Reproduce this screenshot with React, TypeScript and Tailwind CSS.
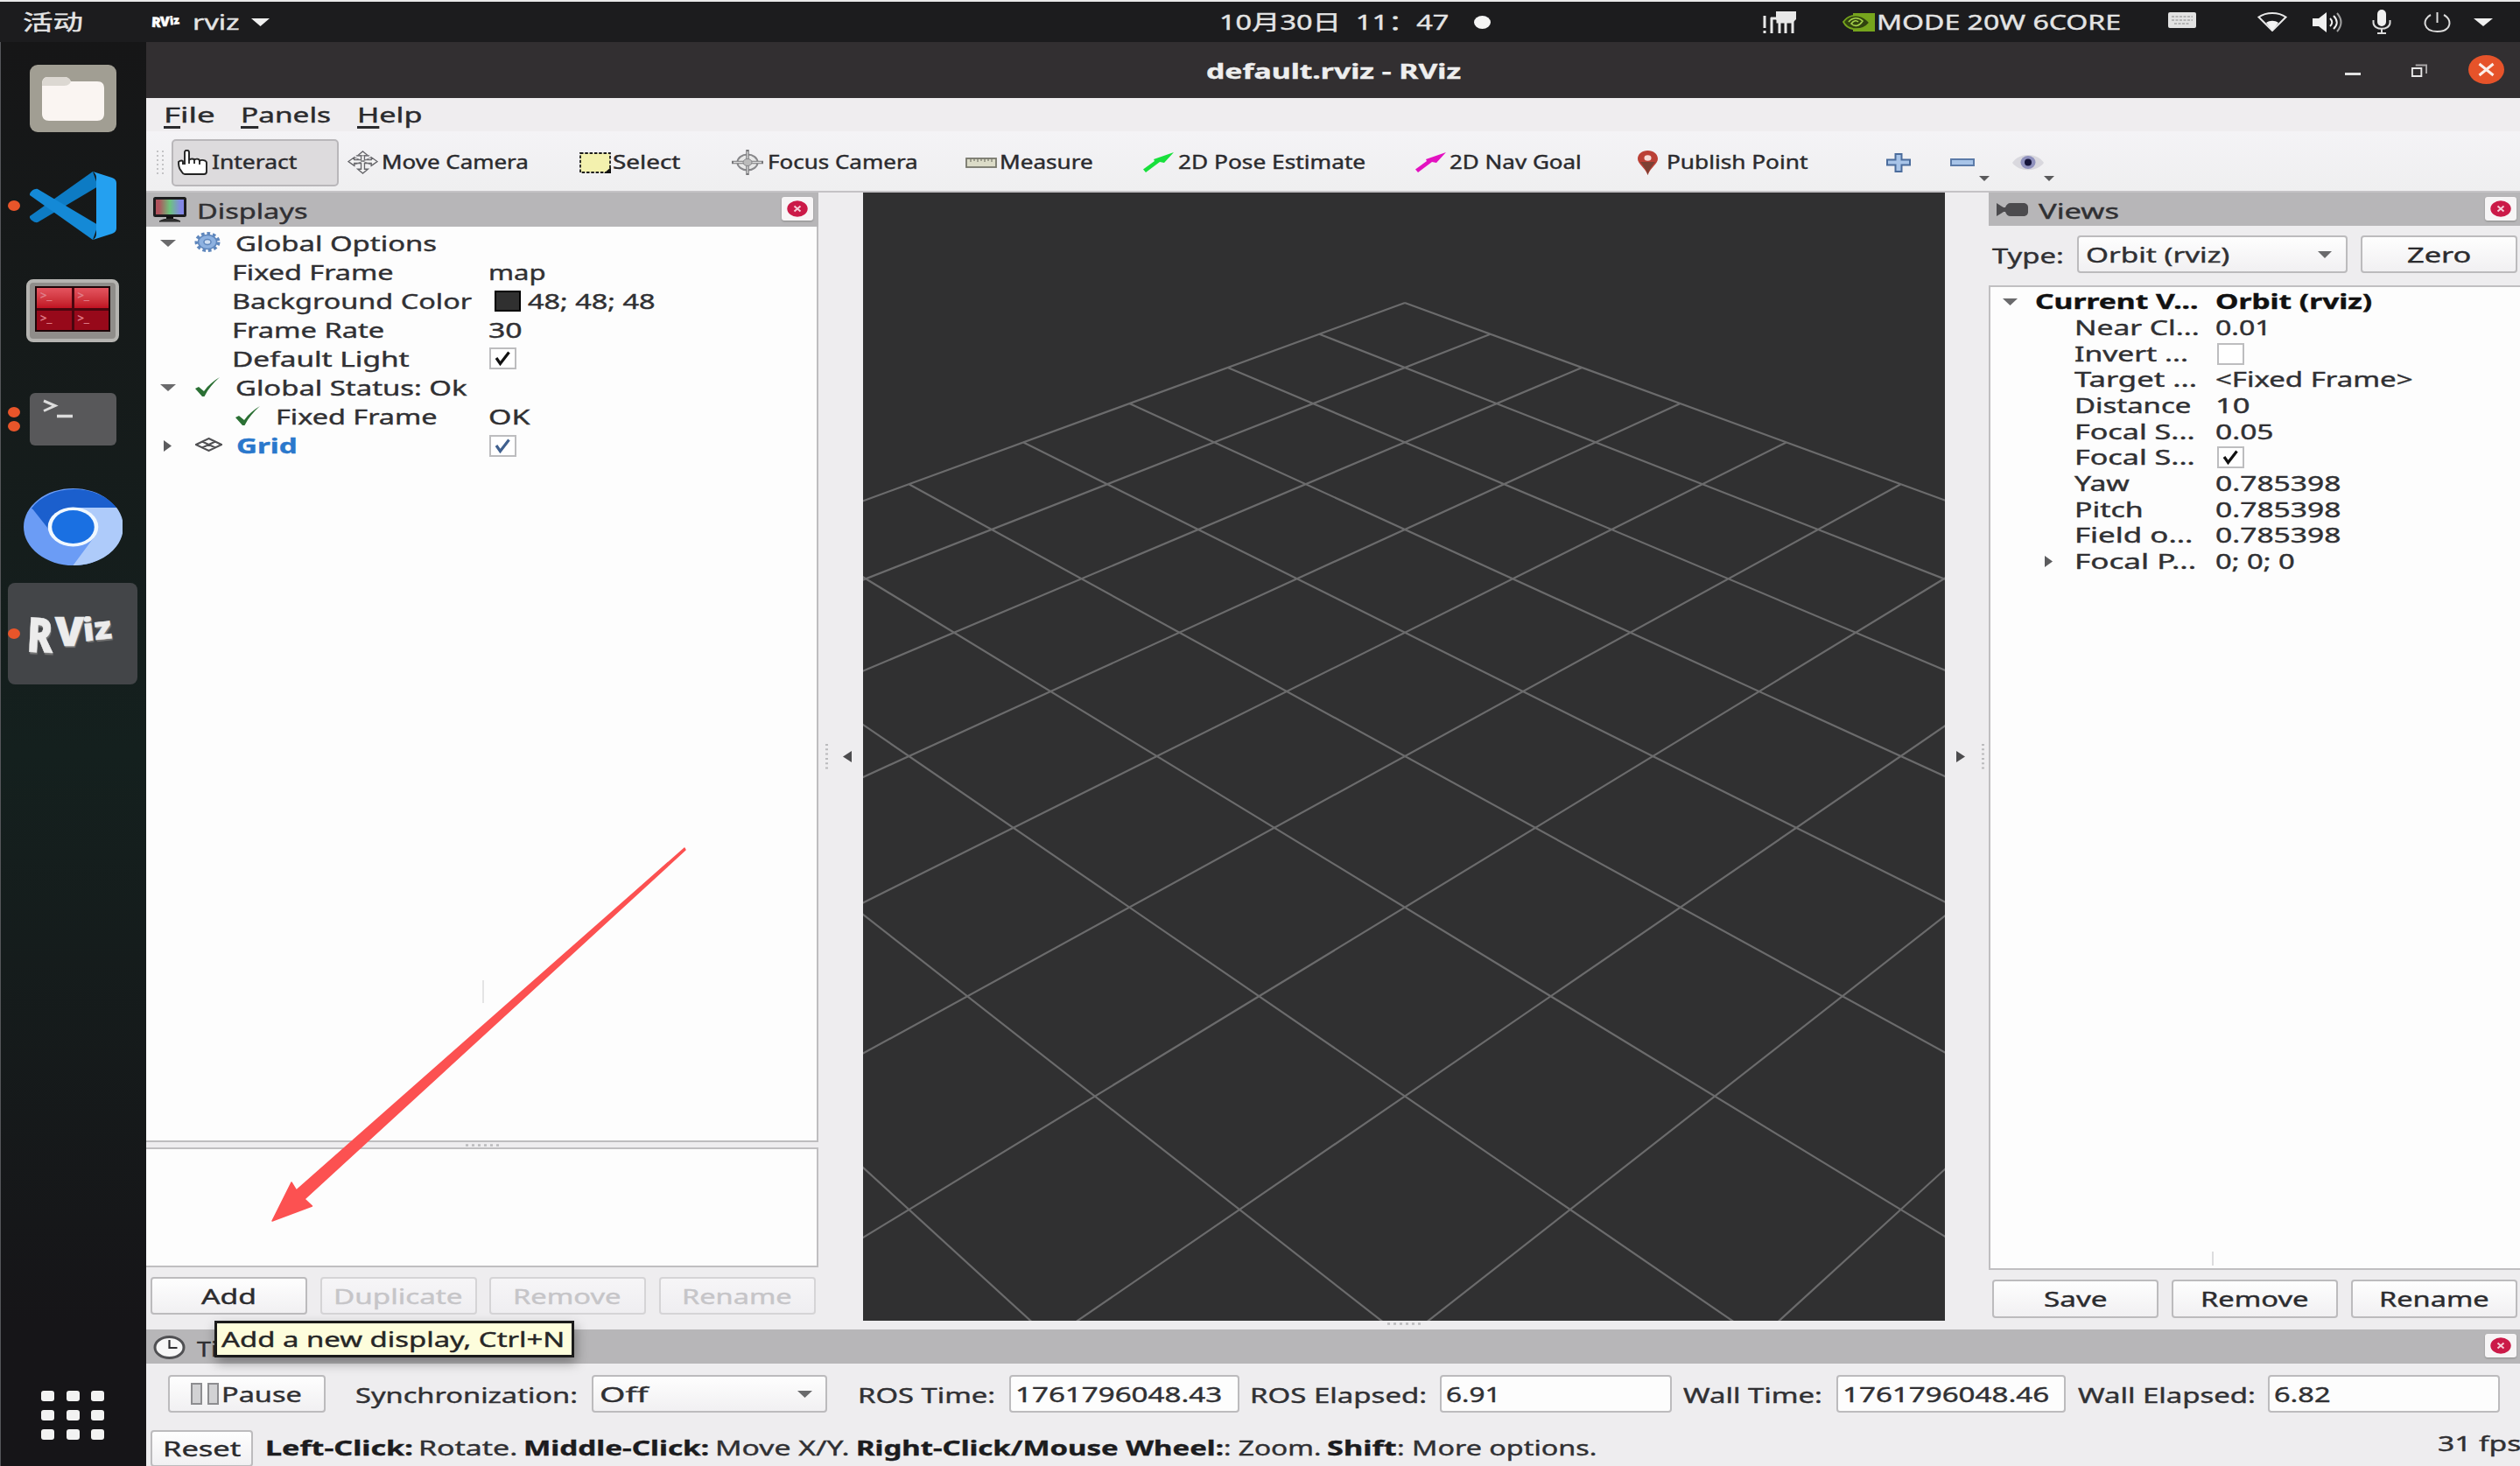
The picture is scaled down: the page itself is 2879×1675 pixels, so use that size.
import React, { useLayoutEffect, useRef, useState } from "react";

/** Single line of text stretched horizontally so that its ink fills a given width. */
function T({ w, c = "", children }: { w: number; c?: string; children: React.ReactNode }) {
  const ref = useRef<HTMLSpanElement>(null);
  const [k, setK] = useState(1);
  useLayoutEffect(() => {
    const el = ref.current;
    if (el && el.offsetWidth > 0) setK((w + 3) / el.offsetWidth);
  }, [w]);
  return (
    <span className={`block shrink-0 whitespace-pre leading-none ${c}`} style={{ width: w }}>
      <span ref={ref} className="inline-block origin-left" style={{ transform: `translateX(-2px) scaleX(${k})` }}>
        {children}
      </span>
    </span>
  );
}

function Svg({ c, box, children }: { c: string; box: string; children: React.ReactNode }) {
  return (
    <svg className={`block shrink-0 ${c}`} viewBox={box} preserveAspectRatio="none" fill="none">
      {children}
    </svg>
  );
}

const Down = ({ c }: { c: string }) => (
  <Svg c={c} box="0 0 10 6">
    <path d="M0 0h10L5 6z" fill="currentColor" />
  </Svg>
);
const Right = ({ c }: { c: string }) => (
  <Svg c={c} box="0 0 6 10">
    <path d="M0 0v10L6 5z" fill="currentColor" />
  </Svg>
);
const DotsAcross = ({ c }: { c: string }) => (
  <Svg c={`h-[3px] w-[38px] ${c}`} box="0 0 38 3">
    <path d="M0 1.500h38" stroke="#bbbbbd" strokeWidth="2.500" strokeDasharray="3 4" />
  </Svg>
);
const DotsDown = ({ c = "" }: { c?: string }) => (
  <Svg c={`h-[29px] w-[3px] ${c}`} box="0 0 3 29">
    <path d="M1.500 0v29" stroke="#bbbbbd" strokeWidth="3" strokeDasharray="2 3.300" />
  </Svg>
);

function RvizLogo({ small }: { small?: boolean }) {
  return small ? (
    <span className="flex h-5 w-[34px] shrink-0 items-center text-[16px] font-black leading-none text-white">
      <span className="inline-block rotate-3">R</span>
      <span className="-ml-px inline-block -translate-y-px">V</span>
      <span className="inline-block -translate-y-0.5 -rotate-6 text-[13px]">iz</span>
    </span>
  ) : (
    <span className="flex h-[50px] w-[104px] items-center text-[44px] font-black leading-none text-[#ececec] [text-shadow:1px_2px_1px_#777]">
      <span className="inline-block translate-y-1 rotate-3 scale-y-125">R</span>
      <span className="ml-[3px] inline-block scale-x-110 scale-y-105">V</span>
      <span className="ml-[2px] inline-block -translate-y-0.5 -rotate-6 scale-x-110 text-[36px]">iz</span>
    </span>
  );
}

function CloseBtn({ c = "" }: { c?: string }) {
  return (
    <span className={`flex h-[27px] w-[36px] shrink-0 items-center justify-center rounded-[3px] bg-[#f7f5f6] shadow-[0_1px_2px_#8a8a8a] ${c}`}>
      <Svg c="h-[19px] w-[24px]" box="0 0 24 19">
        <ellipse cx="12" cy="9.5" rx="11.7" ry="9.2" fill="#cb1a48" />
        <path d="M8.5 6.5l7 6M15.500 6.500l-7 6" stroke="#f6cdd8" strokeWidth="2" />
      </Svg>
    </span>
  );
}

function Btn({ c, w, off, children }: { c: string; w: number; off?: boolean; children: React.ReactNode }) {
  return (
    <span
      className={`flex shrink-0 items-center justify-center rounded-[4px] border-2 bg-linear-to-b text-2xl ${
        off ? "border-[#d5d4d6] from-[#f6f5f7] to-[#efeef1] text-[#c6c5c8]" : "border-[#bcbbbd] from-[#fefefe] to-[#f1f0f2] text-[#2b2b2e]"
      } ${c}`}
    >
      <T w={w}>{children}</T>
    </span>
  );
}

function Check({ on, color = "#111" }: { on?: boolean; color?: string }) {
  return (
    <span className="flex h-[25px] w-[31px] shrink-0 items-center justify-center border-2 border-[#bdbdbf] bg-white">
      {on && (
        <Svg c="h-[17px] w-[19px]" box="0 0 19 17">
          <path d="M2 8l4.500 6.500L16.500 1.500" stroke={color} strokeWidth="3.200" />
        </Svg>
      )}
    </span>
  );
}

const Tick = ({ c }: { c: string }) => (
  <Svg c={`h-[22px] w-[30px] ${c}`} box="0 0 30 22">
    <path d="M1 13l4-2 6 5C16 9 22 4 29 0 22 6 16 13 11.500 22H9z" fill="#2b7034" />
  </Svg>
);

/* ---------- top bar ---------- */
function TopBar() {
  return (
    <div className="flex h-12 items-center border-t-2 border-[#e9e9ea] bg-[#1c1c1e] text-2xl text-[#e4e4e4]">
      <T w={66} c="ml-[28px]">活动</T>
      <span className="ml-[79px] flex">
        <RvizLogo small />
      </span>
      <T w={51} c="ml-[15px]">rviz</T>
      <Down c="ml-[14px] h-[9px] w-[21px] text-[#f0f0f0]" />
      <T w={259} c="ml-[1087px]">{"10月30日  11：47"}</T>
      <span className="ml-[30px] h-[15px] w-[19px] rounded-[50%] bg-[#f4f4f4]" />
      <Svg c="ml-[311px] h-[27px] w-[38px]" box="0 0 38 27">
        <path d="M2 6v14M2 23v3M10 8v18M19 11v15M26 12v14M34 12v14" stroke="#e8e8e8" strokeWidth="3" />
        <path d="M9 9h8v4h18" stroke="#e8e8e8" strokeWidth="3" />
        <path d="M15 1h23v9l-4 4H19l-4-4z" fill="#e8e8e8" />
      </Svg>
      <Svg c="ml-[53px] h-[21px] w-[37px]" box="0 0 37 21">
        <path d="M12 0h25v21H12z" fill="#76a51d" />
        <path d="M1 10C6 3 14 1 22 4c4 2 7 4 9 7-5 6-12 8-19 7C6 17 3 14 1 10z" fill="#31430f" stroke="#76a51d" strokeWidth="1.800" />
        <path d="M7 10c4-5 11-6 16-1-4 6-9 7-13 3 3-4 6-4 8-2" stroke="#a5d34a" strokeWidth="1.600" />
      </Svg>
      <T w={276} c="ml-[4px]">MODE 20W 6CORE</T>
      <Svg c="ml-[55px] -mt-1 h-[18px] w-[32px]" box="0 0 32 18">
        <rect width="32" height="18" rx="2" fill="#e2e2e2" />
        <path d="M4 5h24M4 9h24M7 13h18" stroke="#a5a5a5" strokeWidth="1.500" strokeDasharray="3 1.500" />
      </Svg>
      <Svg c="ml-[70px] h-[22px] w-[34px]" box="0 0 34 22">
        <path d="M1.500 5.500C10-.5 24-.5 32.500 5.500L17 21z" stroke="#e8e8e8" strokeWidth="2" />
        <path d="M10 12c4-3 10-3 14 0l-7 9z" fill="#f4f4f4" />
      </Svg>
      <Svg c="ml-[29px] h-[23px] w-[34px]" box="0 0 34 23">
        <path d="M0 7h7l9-7v23l-9-7H0z" fill="#f0f0f0" />
        <path d="M20 7c3 3 3 6 0 9M24 4c5 5 5 10 0 15" stroke="#f0f0f0" strokeWidth="2" />
        <path d="M28 1c6 7 6 14 0 21" stroke="#a0a0a0" strokeWidth="2" />
      </Svg>
      <Svg c="ml-[34px] h-[28px] w-[22px]" box="0 0 22 28">
        <rect x="6" width="10" height="19" rx="5" fill="#f0f0f0" />
        <path d="M1.500 12v3c0 9 19 9 19 0v-3M11 22v4M6 27h10" stroke="#dcdcdc" strokeWidth="2" />
      </Svg>
      <Svg c="ml-[37px] h-[23px] w-[31px]" box="0 0 31 23">
        <path d="M8 3C-2 8-1 22 15.500 22S33 8 23 3M15.500 0v12" stroke="#dcdcdc" strokeWidth="2" />
      </Svg>
      <Down c="ml-[26px] h-[9px] w-[22px] text-[#f0f0f0]" />
    </div>
  );
}

/* ---------- dock ---------- */
function DockItem({ c, dots = 0, children }: { c: string; dots?: number; children: React.ReactNode }) {
  return (
    <div className={`relative flex w-full shrink-0 items-center justify-center ${c}`}>
      {dots > 0 && (
        <span className="absolute inset-y-0 left-[8px] flex flex-col items-center justify-center gap-[4px]">
          {Array.from({ length: dots }, (_, i) => (
            <span key={i} className="h-[12px] w-[14px] rounded-[50%] bg-[#e8552a]" />
          ))}
        </span>
      )}
      {children}
    </div>
  );
}

function Dock() {
  return (
    <div className="flex w-[167px] shrink-0 flex-col border-l border-[#55565a] bg-linear-to-b from-[#161617] from-0% via-[#14201e] via-50% to-[#161518] to-90% pr-[2px]">
      <DockItem c="mt-[26px] h-[77px]">
        <Svg c="h-[77px] w-[99px]" box="0 0 99 77">
          <rect width="99" height="77" rx="9" fill="#a19e93" />
          <path d="M14 22c0-5 2-8 7-8h17c5 0 7 1 9 5h30c6 0 8 3 8 8v29c0 5-3 8-8 8H22c-5 0-8-3-8-8z" fill="#faf5f2" />
          <path d="M14 24c0-7 2-10 7-10h17c5 0 7 1 9 5-2 5-6 5-12 5z" fill="#dcd8d2" />
        </Svg>
      </DockItem>
      <DockItem c="mt-[45px] h-[78px]" dots={1}>
        <Svg c="h-[78px] w-[99px]" box="0 0 99 78">
          <path d="M72 0L0 51c-1 3 5 8 9 7L78 17z" fill="#0d7bc4" />
          <path d="M72 78L0 27c-1-3 5-8 9-7l69 41z" fill="#1489d6" />
          <path d="M72 0l22 7c3 1 5 3 5 6v52c0 3-2 5-5 6l-22 7c3-2 4-4 4-7V7c0-3-1-5-4-7z" fill="#24a0f0" />
        </Svg>
      </DockItem>
      <DockItem c="mt-[45px] h-[72px]">
        <div className="flex h-[72px] w-[106px] items-start justify-center rounded-[8px] border-4 border-[#b5b4b1] bg-[#8f8d8a] pt-[4px]">
          <div className="grid h-[52px] w-[86px] grid-cols-2 gap-[3px] border-2 border-[#1d0508] bg-[#4a060f] text-[13px] leading-none text-[#e0808c]">
            <span className="bg-linear-to-b from-[#e4545f] to-[#c01022] pl-1 pt-[2px]">&gt;_</span>
            <span className="bg-linear-to-b from-[#e4545f] to-[#c01022] pl-1 pt-[2px]">&gt;_</span>
            <span className="bg-[#97091a] pl-1 pt-[2px]">&gt;_</span>
            <span className="bg-[#97091a] pl-1 pt-[2px]">&gt;_</span>
          </div>
        </div>
      </DockItem>
      <DockItem c="mt-[58px] h-[60px]" dots={2}>
        <Svg c="h-[60px] w-[99px]" box="0 0 99 60">
          <rect width="99" height="60" rx="6" fill="#58585a" />
          <path d="M16 9l13 5.500-13 6" stroke="#dcdcdc" strokeWidth="3" />
          <path d="M31 26.500h18" stroke="#dcdcdc" strokeWidth="3.500" />
        </Svg>
      </DockItem>
      <DockItem c="mt-[49px] h-[88px]">
        <Svg c="h-[88px] w-[113px]" box="-50 -50 100 100">
          <circle r="50" fill="#6b9cf5" />
          <path d="M0 0L-42-24A50 50 0 0 1 44-25H0z" fill="#1b5fcd" />
          <path d="M-42-25L-18 14 0 0z" fill="#1b5fcd" />
          <path d="M0-25H44A50 50 0 0 1 0 50L22 12z" fill="#aecbfa" />
          <circle r="25.500" fill="#f0f8ff" />
          <circle r="21.500" fill="#1a70e2" />
        </Svg>
      </DockItem>
      <DockItem c="mt-[20px] h-[116px]" dots={1}>
        <div className="flex h-[116px] w-[148px] items-center justify-center rounded-[8px] bg-[#434548] pb-2">
          <RvizLogo />
        </div>
      </DockItem>
      <div className="mt-auto mb-[30px] ml-[46px] grid w-[72px] grid-cols-3 gap-x-[14px] gap-y-[10px]">
        {Array.from({ length: 9 }, (_, i) => (
          <span key={i} className="h-[12px] w-[15px] rounded-[3px] bg-[#f2f2f2]" />
        ))}
      </div>
    </div>
  );
}

/* ---------- tool bar ---------- */
function Pose({ color, c }: { color: string; c: string }) {
  return (
    <Svg c={`h-[23px] w-[36px] ${c}`} box="0 0 36 23">
      <path d="M1 19.500L14 10l-1-2L36 0 25 12l-5-1L4 23z" fill={color} />
    </Svg>
  );
}

function ToolBar() {
  return (
    <div className="flex h-[70px] items-center border-b-2 border-[#c4c2c5] bg-linear-to-b from-[#f4f3f6] to-[#efeff0] pt-[3px] text-[21px] text-[#2a2a2d]">
      <Svg c="ml-[11px] h-[28px] w-[10px]" box="0 0 10 28">
        <path d="M2 0v28M8 0v28" stroke="#c3c3c5" strokeWidth="2" strokeDasharray="2 3" />
      </Svg>
      <span className="ml-[8px] flex h-[54px] w-[191px] shrink-0 items-center rounded-[5px] border-2 border-[#b9b7ba] bg-[#dddbdd]">
        <Svg c="ml-[5px] h-[29px] w-[35px]" box="0 0 35 29">
          <path
            d="M8 17V3c0-3 5-3 5 0v9c1-2 6-2 6 0 1-2 6-2 6 1 2-2 8-1 8 2v10c0 2-1 3-3 3H8c-3 0-3-3-5-5-2-3-2-7-2-9 2-2 5-2 5 0v3"
            fill="#fff"
            stroke="#222"
            strokeWidth="1.900"
          />
          <path d="M13 12v4M19 12v4M25 13v4" stroke="#222" strokeWidth="1.800" />
        </Svg>
        <T w={94} c="ml-[6px]">Interact</T>
      </span>
      <Svg c="ml-[10px] h-[27px] w-[35px]" box="0 0 36 28">
        <path d="M18 1l6 5h-4v5h8V8l7 5-7 5v-3h-8v7h4l-6 5-6-5h4v-7H8v3l-7-5 7-5v3h8V6h-4z" fill="#f4f4f4" stroke="#66666a" strokeWidth="1.400" />
        <path d="M8 8l20 9M28 8L8 17M10 6h16" stroke="#77777a" />
      </Svg>
      <T w={165} c="ml-[6px]">Move Camera</T>
      <Svg c="ml-[59px] h-[24px] w-[36px]" box="0 0 36 24">
        <rect x="1" y="1" width="34" height="22" fill="#f3f1ae" stroke="#1c1c1c" strokeWidth="1.800" strokeDasharray="3.500 1.800" />
        <path d="M36 17v7h-8z" fill="#111" />
      </Svg>
      <T w={74} c="ml-[4px]">Select</T>
      <Svg c="ml-[60px] h-[29px] w-[36px]" box="0 0 36 29">
        <ellipse cx="18" cy="14.500" rx="11.500" ry="9" fill="#e8e8e8" stroke="#88888b" strokeWidth="2" />
        <path d="M18 0v29M0 14.500h36" stroke="#77777a" strokeWidth="3.500" />
        <path d="M18 2v25M2 14.500h32" stroke="#dedede" strokeWidth="1.300" />
        <ellipse cx="18" cy="14.500" rx="5" ry="4" fill="#bbb" stroke="#88888b" />
      </Svg>
      <T w={169} c="ml-[7px]">Focus Camera</T>
      <Svg c="ml-[55px] h-[12px] w-[36px]" box="0 0 36 12">
        <rect x="1" y="1" width="34" height="10" fill="#dcdcc8" stroke="#77776c" strokeWidth="1.800" />
        <path d="M6 1v4M10 1v3M14 1v4M18 1v3M22 1v4M26 1v3M30 1v4" stroke="#77776c" strokeWidth="1.200" />
      </Svg>
      <T w={104} c="ml-[5px]">Measure</T>
      <Pose color="#18e03c" c="ml-[57px]" />
      <T w={211} c="ml-[7px]">2D Pose Estimate</T>
      <Pose color="#e312c0" c="ml-[57px]" />
      <T w={148} c="ml-[6px]">2D Nav Goal</T>
      <Svg c="ml-[65px] h-[28px] w-[23px]" box="0 0 23 28">
        <path d="M11.500 0C5 0 0 4 0 9.500 0 15 8 19 11.500 28 15 19 23 15 23 9.500 23 4 18 0 11.500 0z" fill="#bb4036" />
        <path d="M3 13c3 4 7 8 8.500 15C13 21 17 17 20 13z" fill="#7d4034" />
        <ellipse cx="11.500" cy="8.500" rx="4" ry="3.200" fill="#f6dcd8" />
      </Svg>
      <T w={158} c="ml-[12px]">Publish Point</T>
      <Svg c="ml-[91px] h-[22px] w-[28px]" box="0 0 28 22">
        <path d="M10.500 1h7v6.500H27v6h-9.500V21h-7v-7.500H1v-6h9.500z" fill="#a8c4e8" stroke="#4b6c9c" strokeWidth="2" />
      </Svg>
      <Svg c="ml-[45px] h-[9px] w-[28px]" box="0 0 28 9">
        <rect x="1" y="1" width="26" height="7" fill="#a8c4e8" stroke="#5c7ba8" strokeWidth="2" />
      </Svg>
      <Down c="ml-[5px] mt-[36px] h-[6px] w-[12px] text-[#5a5a5c]" />
      <Svg c="ml-[26px] h-[19px] w-[36px]" box="0 0 36 19">
        <path d="M0 10C8-2 28-2 36 10 28 21 8 21 0 10z" fill="#d9d8de" />
        <ellipse cx="18" cy="9.500" rx="8.500" ry="7.500" fill="#8f91bd" />
        <ellipse cx="18" cy="9.500" rx="4" ry="4" fill="#15153a" />
      </Svg>
      <Down c="mt-[36px] h-[6px] w-[12px] text-[#5a5a5c]" />
    </div>
  );
}

/* ---------- displays panel ---------- */
const ROW = "flex h-[33.1px] shrink-0 items-center";

function DisplaysPanel() {
  return (
    <div className="flex w-[768px] shrink-0 flex-col text-2xl text-[#303033]">
      <div className="flex h-[39px] shrink-0 items-center bg-[#b7b6b8]">
        <Svg c="ml-[8px] h-[29px] w-[38px]" box="0 0 38 29">
          <defs>
            <linearGradient id="rgb">
              <stop offset="0.150" stopColor="#b0525c" />
              <stop offset="0.500" stopColor="#6cc47c" />
              <stop offset="0.850" stopColor="#8387e6" />
            </linearGradient>
          </defs>
          <rect x="1.500" y="1.500" width="35" height="20" rx="1" fill="url(#rgb)" stroke="#1c1c1e" strokeWidth="3" />
          <path d="M15 22h8v3h-8z" fill="#111" />
          <path d="M7 28c5-4 19-4 24 0z" fill="#333" stroke="#222" />
        </Svg>
        <T w={123} c="ml-[14px] mt-[3px]">Displays</T>
        <CloseBtn c="ml-auto mr-[6px] -mt-[2px]" />
      </div>
      <div className="flex h-[1046px] shrink-0 flex-col border-r-2 border-b-2 border-[#bebdbf] bg-[#fdfdfd] pt-[2px]">
        <div className={ROW}>
          <Down c="ml-[16px] h-[8px] w-[18px] text-[#6a6a6c]" />
          <Svg c="-mt-[2px] ml-[21px] h-[23px] w-[30px]" box="0 0 30 23">
            <ellipse cx="15" cy="11.500" rx="12.500" ry="9.500" stroke="#5f87bd" strokeWidth="4" strokeDasharray="3.600 2.800" />
            <ellipse cx="15" cy="11.500" rx="10.500" ry="8" fill="#8db1e0" stroke="#5f87bd" strokeWidth="1.500" />
            <ellipse cx="15" cy="11.500" rx="4" ry="3" fill="#cfdff3" stroke="#5f87bd" strokeWidth="1.500" />
          </Svg>
          <T w={227} c="ml-[19px]">Global Options</T>
        </div>
        <div className={ROW}>
          <T w={182} c="ml-[100px]">Fixed Frame</T>
          <T w={63} c="ml-[111px]">map</T>
        </div>
        <div className={ROW}>
          <T w={271} c="ml-[100px]">Background Color</T>
          <span className="ml-[27px] h-[24px] w-[30px] border-2 border-black bg-[#303030]" />
          <T w={143} c="ml-[10px]">48; 48; 48</T>
        </div>
        <div className={ROW}>
          <T w={171} c="ml-[100px]">Frame Rate</T>
          <T w={35} c="ml-[122px]">30</T>
        </div>
        <div className={ROW}>
          <T w={200} c="ml-[100px] mr-[92px]">Default Light</T>
          <Check on />
        </div>
        <div className={ROW}>
          <Down c="ml-[16px] h-[8px] w-[18px] text-[#6a6a6c]" />
          <Tick c="-mt-[2px] ml-[21px]" />
          <T w={261} c="ml-[19px]">Global Status: Ok</T>
        </div>
        <div className={ROW}>
          <Tick c="-mt-[2px] ml-[101px]" />
          <T w={182} c="ml-[19px]">Fixed Frame</T>
          <T w={45} c="ml-[61px]">OK</T>
        </div>
        <div className={ROW}>
          <Right c="ml-[20px] h-[13px] w-[9px] text-[#5c5c5e]" />
          <Svg c="-mt-[2px] ml-[27px] h-[16px] w-[31px]" box="0 0 31 16">
            <path d="M15.500 1L30 8l-14.500 7L1 8zM8 4.500L23 11.500M23 4.500L8 11.500" stroke="#505053" strokeWidth="2" />
          </Svg>
          <T w={66} c="ml-[18px] mr-[221px] font-bold text-[#2a78cc]">Grid</T>
          <Check on color="#40608e" />
        </div>
        <span className="mt-[594px] ml-[384px] h-[26px] w-[2px] bg-[#e4e4e5]" />
      </div>
      <div className="flex h-[6px] shrink-0 items-center justify-center">
        <DotsAcross c="" />
      </div>
      <div className="h-[137px] shrink-0 border-2 border-l-0 border-[#c0bfc1] bg-[#fdfdfd]" />
      <div className="mt-[11px] flex gap-[14.500px] pl-[5px]">
        <Btn c="h-[43px] w-[179px]" w={60}>Add</Btn>
        <Btn c="h-[43px] w-[179px]" w={145} off>Duplicate</Btn>
        <Btn c="h-[43px] w-[179px]" w={121} off>Remove</Btn>
        <Btn c="h-[43px] w-[179px]" w={123} off>Rename</Btn>
      </div>
    </div>
  );
}

/* ---------- 3D view ---------- */
const HALF = 5;
const project = (a: number, b: number) => {
  const depth = 10 + (a + b) / 2;
  const x = 619 + (2003 * (a - b)) / Math.SQRT2 / depth;
  const y = 644 - (1554 * (a + b)) / 2 / depth;
  return `${x.toFixed(1)} ${y.toFixed(1)}`;
};
const gridPath = Array.from({ length: 2 * HALF + 1 }, (_, i) => i - HALF)
  .map((k) => `M${project(k, -HALF)}L${project(k, HALF)}M${project(-HALF, k)}L${project(HALF, k)}`)
  .join("");

function RenderView() {
  return (
    <svg className="block h-[1289px] w-[1236px] shrink-0 bg-[#303031]" viewBox="0 0 1236 1289">
      <path d={gridPath} stroke="#6b6b6c" strokeWidth="2.200" fill="none" />
    </svg>
  );
}

/* ---------- views panel ---------- */
function ViewRow({ name, nw, value, vw, bold, check }: { name: string; nw: number; value?: string; vw?: number; bold?: boolean; check?: boolean }) {
  const last = value === "0; 0; 0";
  return (
    <div className={`flex h-[29.66px] shrink-0 items-center ${bold ? "font-bold text-[#111]" : ""}`}>
      <span className={`flex shrink-0 items-center ${bold ? "w-[53px] pl-[14px]" : "w-[98px] pl-[62px]"}`}>
        {bold && <Down c="h-[8px] w-[17px] text-[#6a6a6c]" />}
        {last && <Right c="h-[13px] w-[9px] text-[#5c5c5e]" />}
      </span>
      <span className={`shrink-0 ${bold ? "w-[206px]" : "w-[161px]"}`}>
        <T w={nw}>{name}</T>
      </span>
      {value ? <T w={vw ?? 0}>{value}</T> : <Check on={check} />}
    </div>
  );
}

function ViewsPanel() {
  return (
    <div className="flex w-[607px] shrink-0 flex-col text-2xl text-[#303033]">
      <div className="flex h-[38px] shrink-0 items-center bg-[#b7b6b8]">
        <Svg c="ml-[9px] h-[15px] w-[36px]" box="0 0 36 15">
          <path d="M0 0l8 5h2c1-3 3-5 6-5h14c4 0 6 2 6 5v5c0 3-2 5-6 5H16c-3 0-5-2-6-5H8l-8 5z" fill="#4c4b4e" />
        </Svg>
        <T w={89} c="ml-[14px] mt-[3px]">Views</T>
        <CloseBtn c="ml-auto mr-[4px] -mt-[2px]" />
      </div>
      <div className="mt-[11px] flex h-[43px] shrink-0 items-center">
        <T w={79} c="ml-[6px] mt-[2px]">Type:</T>
        <span className="ml-[16px] flex h-[43px] w-[309px] shrink-0 items-center rounded-[4px] border-2 border-[#bcbbbd] bg-linear-to-b from-[#fefefe] to-[#f1f0f2]">
          <T w={162} c="ml-[10px]">Orbit (rviz)</T>
          <Down c="ml-[101px] h-[8px] w-[16px] text-[#6a6a6c]" />
        </span>
        <Btn c="ml-[15px] h-[43px] w-[179px]" w={70}>Zero</Btn>
      </div>
      <div className="mt-[14px] flex h-[1125px] shrink-0 flex-col border-2 border-r-0 border-[#c0bfc1] bg-[#fdfdfd] pt-[2px] text-[23px]">
        <ViewRow bold name="Current V..." nw={184} value="Orbit (rviz)" vw={176} />
        <ViewRow name="Near Cl..." nw={140} value="0.01" vw={61} />
        <ViewRow name="Invert ..." nw={127} />
        <ViewRow name="Target ..." nw={137} value="<Fixed Frame>" vw={222} />
        <ViewRow name="Distance" nw={130} value="10" vw={36} />
        <ViewRow name="Focal S..." nw={135} value="0.05" vw={64} />
        <ViewRow name="Focal S..." nw={135} check />
        <ViewRow name="Yaw" nw={60} value="0.785398" vw={140} />
        <ViewRow name="Pitch" nw={75} value="0.785398" vw={140} />
        <ViewRow name="Field o..." nw={132} value="0.785398" vw={140} />
        <ViewRow name="Focal P..." nw={136} value="0; 0; 0" vw={88} />
        <span className="mt-auto mb-[3px] ml-[253px] h-[16px] w-[2px] bg-[#dcdcde]" />
      </div>
      <div className="mt-[11px] flex gap-[15px] pl-[4px]">
        <Btn c="h-[44px] w-[190px]" w={69}>Save</Btn>
        <Btn c="h-[44px] w-[190px]" w={121}>Remove</Btn>
        <Btn c="h-[44px] w-[190px]" w={123}>Rename</Btn>
      </div>
    </div>
  );
}

function Splitter({ side }: { side: "left" | "right" }) {
  return side === "left" ? (
    <div className="flex h-[1289px] w-[51px] shrink-0 items-center pl-[8px]">
      <DotsDown />
      <Right c="ml-[17px] h-[13px] w-[10px] rotate-180 text-[#4c4c4e]" />
    </div>
  ) : (
    <div className="flex h-[1289px] w-[50px] shrink-0 items-center pl-[13px]">
      <Right c="mr-[19px] h-[13px] w-[10px] text-[#4c4c4e]" />
      <DotsDown />
    </div>
  );
}

/* ---------- time panel ---------- */
function Field({ c, w, children }: { c: string; w: number; children: string }) {
  return (
    <span className={`flex h-[43px] shrink-0 items-center rounded-[4px] border-2 border-[#bcbbbd] bg-[#fdfdfd] pl-[7px] ${c}`}>
      <T w={w}>{children}</T>
    </span>
  );
}

function TimePanel() {
  return (
    <>
      <div className="flex h-[39px] shrink-0 items-center bg-[#b7b6b8] text-2xl text-[#303033]">
        <Svg c="ml-[8px] mt-[2px] h-[27px] w-[37px]" box="0 0 37 27">
          <ellipse cx="18.500" cy="13.500" rx="16.500" ry="12" fill="#f7f7f7" stroke="#505053" strokeWidth="3" />
          <path d="M18.500 5v9h9" stroke="#303033" strokeWidth="2.200" />
        </Svg>
        <T w={64} c="ml-[15px] mt-1">Time</T>
        <CloseBtn c="ml-auto mr-[4px] -mt-[2px]" />
      </div>
      <div className="flex h-[69px] shrink-0 items-center text-2xl text-[#303033]">
        <span className="ml-[25px] flex h-[43px] w-[180px] shrink-0 items-center rounded-[4px] border-2 border-[#bcbbbd] bg-linear-to-b from-[#fefefe] to-[#f1f0f2]">
          <Svg c="ml-[24px] h-[25px] w-[32px]" box="0 0 32 25">
            <path d="M1 1h11v23H1zM20 1h11v23H20z" fill="#d2d2d4" stroke="#8d8d90" strokeWidth="2" />
          </Svg>
          <T w={89} c="ml-[5px]">Pause</T>
        </span>
        <T w={251} c="ml-[36px] mt-[3px]">Synchronization:</T>
        <span className="ml-[17px] flex h-[43px] w-[269px] shrink-0 items-center rounded-[4px] border-2 border-[#bcbbbd] bg-linear-to-b from-[#fefefe] to-[#f1f0f2]">
          <T w={52} c="ml-[9px]">Off</T>
          <Down c="ml-[172px] h-[8px] w-[17px] text-[#6a6a6c]" />
        </span>
        <T w={154} c="ml-[37px] mt-[3px]">ROS Time:</T>
        <Field c="ml-[17px] w-[263px]" w={233}>1761796048.43</Field>
        <T w={199} c="ml-[14px] mt-[3px]">ROS Elapsed:</T>
        <Field c="ml-[16px] w-[265px]" w={60}>6.91</Field>
        <T w={156} c="ml-[15px] mt-[3px]">Wall Time:</T>
        <Field c="ml-[17px] w-[262px]" w={233}>1761796048.46</Field>
        <T w={200} c="ml-[16px] mt-[3px]">Wall Elapsed:</T>
        <Field c="ml-[15px] w-[265px]" w={62}>6.82</Field>
      </div>
      <div className="flex h-[48px] shrink-0 items-start pt-[7px] text-2xl text-[#303033]">
        <Btn c="h-[42px] w-[117px] ml-[5px]" w={86}>Reset</Btn>
        <div className="ml-[16px] mt-[8px] flex">
          <T w={166} c="font-bold text-[#1c1c1e]">Left-Click:</T>
          <T w={110} c="ml-[9px]">Rotate.</T>
          <T w={209} c="ml-[10px] font-bold text-[#1c1c1e]">Middle-Click:</T>
          <T w={150} c="ml-[10px]">Move X/Y.</T>
          <T w={417} c="ml-[11px] font-bold text-[#1c1c1e]">Right-Click/Mouse Wheel:</T>
          <T w={108} c="ml-[3px]">: Zoom.</T>
          <T w={77} c="ml-[10px] font-bold text-[#1c1c1e]">Shift</T>
          <T w={226} c="ml-[3px]">: More options.</T>
        </div>
        <T w={92} c="ml-auto mt-[3px]">31 fps</T>
      </div>
    </>
  );
}

export default function App() {
  return (
    <div className="relative flex h-[1675px] w-[2879px] flex-col overflow-hidden bg-[#eeedef] font-['Noto_Sans','Noto_Sans_CJK_SC',sans-serif] [-webkit-text-stroke:0.4px]">
      <TopBar />
      <div className="flex h-[1627px]">
        <Dock />
        <div className="flex w-[2712px] shrink-0 flex-col">
          <div className="flex h-[64px] shrink-0 items-center bg-[#322f31] text-2xl text-[#eeeeee]">
            <T w={288} c="ml-[1213px] mt-[1px] font-bold">default.rviz - RViz</T>
            <span className="ml-[1011px] mt-[8px] h-[3px] w-[18px] bg-[#e2e2e2]" />
            <Svg c="ml-[57px] h-[15px] w-[19px]" box="0 0 20 15">
              <path d="M2 5h11v9H2z" stroke="#e8e8e8" strokeWidth="2" />
              <path d="M6 1.500h13V11" stroke="#a9a7a8" strokeWidth="2" />
            </Svg>
            <Svg c="ml-[47px] -mt-px h-[33px] w-[41px]" box="0 0 41 33">
              <ellipse cx="20.500" cy="16.500" rx="20.500" ry="16.500" fill="#e6532a" />
              <path d="M12.500 10l16 13M28.500 10l-16 13" stroke="#fbeee9" strokeWidth="3" />
            </Svg>
          </div>
          <div className="flex h-[38px] shrink-0 items-center bg-[#efedef] text-2xl text-[#2a2a2d]">
            <T w={55} c="ml-[22px]"><u className="decoration-[3px] underline-offset-4">F</u>ile</T>
            <T w={100} c="ml-[33px]"><u className="decoration-[3px] underline-offset-4">P</u>anels</T>
            <T w={71} c="ml-[33px]"><u className="decoration-[3px] underline-offset-4">H</u>elp</T>
          </div>
          <ToolBar />
          <div className="flex h-[1299px] shrink-0">
            <DisplaysPanel />
            <Splitter side="left" />
            <div className="flex w-[1236px] shrink-0 flex-col items-center">
              <RenderView />
              <DotsAcross c="mt-[2px]" />
            </div>
            <Splitter side="right" />
            <ViewsPanel />
          </div>
          <TimePanel />
        </div>
      </div>
      <div className="absolute top-[1509px] left-[245px] flex h-[42px] w-[411px] items-center border-[3px] border-[#1b1b1b] bg-[#fdfddc] text-2xl text-[#262626] shadow-[2px_6px_14px_rgba(0,0,0,0.35)]">
        <T w={390} c="ml-[7px]">Add a new display, Ctrl+N</T>
      </div>
      <svg className="pointer-events-none absolute top-[960px] left-[300px] h-[450px] w-[500px]" viewBox="300 960 500 450">
        <path d="M782 969L338.500 1360L333 1351L311 1395L356.500 1378L348 1370L783 971z" fill="#fc5151" stroke="#fc5151" strokeWidth="1.500" strokeLinejoin="round" />
      </svg>
    </div>
  );
}
